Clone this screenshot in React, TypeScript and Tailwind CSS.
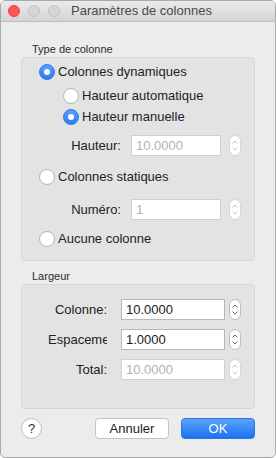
const FONT = { fontFamily: '"Liberation Sans", Arial, sans-serif' }

function Radio({ checked }: { checked?: boolean }) {
  if (checked) {
    return (
      <div className="w-[16px] h-[16px] rounded-full bg-gradient-to-b from-[#5a9ffa] to-[#2c7bf3] border border-[#2f77e6] flex items-center justify-center flex-shrink-0">
        <div className="w-[6px] h-[6px] rounded-full bg-white" />
      </div>
    )
  }
  return <div className="w-[16px] h-[16px] rounded-full bg-white border border-[#b4b4b4] flex-shrink-0" />
}

function Stepper({ disabled }: { disabled?: boolean }) {
  const c = disabled ? '#c4c4c4' : '#6a6a6a'
  return (
    <div className={`w-[12px] h-[21px] rounded-[6px] bg-white border flex flex-col items-center justify-center gap-[3px] flex-shrink-0 ${disabled ? 'border-[#d6d6d6]' : 'border-[#bdbdbd]'}`}>
      <svg width="6" height="4" viewBox="0 0 6 4">
        <path d="M0.5 3.5 L3 1 L5.5 3.5" fill="none" stroke={c} strokeWidth="1" />
      </svg>
      <svg width="6" height="4" viewBox="0 0 6 4">
        <path d="M0.5 0.5 L3 3 L5.5 0.5" fill="none" stroke={c} strokeWidth="1" />
      </svg>
    </div>
  )
}

function RadioRow({ checked, label, indent, mt }: { checked?: boolean; label: string; indent: string; mt: string }) {
  return (
    <div className={`flex items-center h-[20px] gap-[3px] ${indent} ${mt}`}>
      <Radio checked={checked} />
      <span className="text-[13px] text-[#222]">{label}</span>
    </div>
  )
}

function FieldRow({
  label,
  value,
  disabled,
  inputW,
  pl,
  gap,
  stepGap,
  mt,
}: {
  label: string
  value: string
  disabled?: boolean
  inputW: string
  pl: string
  gap: string
  stepGap: string
  mt: string
}) {
  return (
    <div className={`flex items-center h-[21px] ${pl} ${mt}`}>
      <div className="w-[59px] overflow-hidden whitespace-nowrap text-right text-[13px] text-[#222] flex-shrink-0">{label}</div>
      <div
        className={`${gap} ${inputW} h-[21px] bg-white border flex items-center pl-[4px] text-[13px] flex-shrink-0 ${
          disabled ? 'border-[#d0d0d0] text-[#b2b2b2]' : 'border-[#b8b8b8] text-[#1a1a1a]'
        }`}
      >
        {value}
      </div>
      <div className={stepGap}>
        <Stepper disabled={disabled} />
      </div>
    </div>
  )
}

export default function App() {
  return (
    <div className="w-[276px] h-[458px] bg-[#ececec] border border-[#a9a9a9] rounded-[5px] overflow-hidden flex flex-col" style={FONT}>
      {/* title bar */}
      <div className="h-[21px] flex-shrink-0 bg-gradient-to-b from-[#ebebeb] to-[#d4d4d4] border-b border-[#bdbdbd] flex items-center">
        <div className="flex items-center gap-[8px] pl-[7px]">
          <div className="w-[12px] h-[12px] rounded-full bg-[#fc5753] border border-[#df4744]" />
          <div className="w-[12px] h-[12px] rounded-full bg-[#d6d6d6] border border-[#c3c3c3]" />
          <div className="w-[12px] h-[12px] rounded-full bg-[#d6d6d6] border border-[#c3c3c3]" />
        </div>
        <div className="ml-[11px] text-[13px] text-[#4a4a4a]">Paramètres de colonnes</div>
      </div>

      <div className="flex flex-col px-[20px] pt-[21px]">
        <div className="h-[13px] leading-[13px] text-[11px] text-[#2b2b2b] pl-[11px] mb-[1px]">Type de colonne</div>
        <div className="h-[204px] bg-[#e3e3e3] border border-[#d7d7d7] rounded-[4px] flex flex-col">
          <RadioRow checked label="Colonnes dynamiques" indent="pl-[17px]" mt="mt-[4px]" />
          <RadioRow label="Hauteur automatique" indent="pl-[41px]" mt="mt-[4px]" />
          <RadioRow checked label="Hauteur manuelle" indent="pl-[41px]" mt="mt-[1px]" />
          <FieldRow label="Hauteur:" value="10.0000" disabled inputW="w-[90px]" pl="pl-[40px]" gap="ml-[10px]" stepGap="ml-[8px]" mt="mt-[8px]" />
          <RadioRow label="Colonnes statiques" indent="pl-[17px]" mt="mt-[11px]" />
          <FieldRow label="Numéro:" value="1" disabled inputW="w-[90px]" pl="pl-[40px]" gap="ml-[10px]" stepGap="ml-[8px]" mt="mt-[12px]" />
          <RadioRow label="Aucune colonne" indent="pl-[17px]" mt="mt-[9px]" />
        </div>

        <div className="h-[13px] leading-[13px] text-[11px] text-[#2b2b2b] pl-[11px] mt-[9px] mb-[1px]">Largeur</div>
        <div className="h-[125px] bg-[#e3e3e3] border border-[#d7d7d7] rounded-[4px] flex flex-col">
          <FieldRow label="Colonne:" value="10.0000" inputW="w-[104px]" pl="pl-[26px]" gap="ml-[14px]" stepGap="ml-[4px]" mt="mt-[14px]" />
          <FieldRow label="Espacement:" value="1.0000" inputW="w-[104px]" pl="pl-[26px]" gap="ml-[14px]" stepGap="ml-[4px]" mt="mt-[9px]" />
          <FieldRow label="Total:" value="10.0000" disabled inputW="w-[104px]" pl="pl-[26px]" gap="ml-[14px]" stepGap="ml-[4px]" mt="mt-[9px]" />
        </div>

        <div className="flex items-center mt-[9px] h-[21px]">
          <div className="w-[21px] h-[21px] rounded-full bg-white border border-[#bcbcbc] flex items-center justify-center text-[13px] text-[#333]">?</div>
          <div className="ml-[53px] w-[74px] h-[21px] bg-white border border-[#c3c3c3] rounded-[4px] flex items-center justify-center text-[13px] text-[#222]">Annuler</div>
          <div className="ml-[12px] w-[74px] h-[21px] bg-gradient-to-b from-[#5ba3fb] to-[#1b71f1] border border-[#2a74e4] rounded-[4px] flex items-center justify-center text-[13px] text-white">OK</div>
        </div>
      </div>
    </div>
  )
}
